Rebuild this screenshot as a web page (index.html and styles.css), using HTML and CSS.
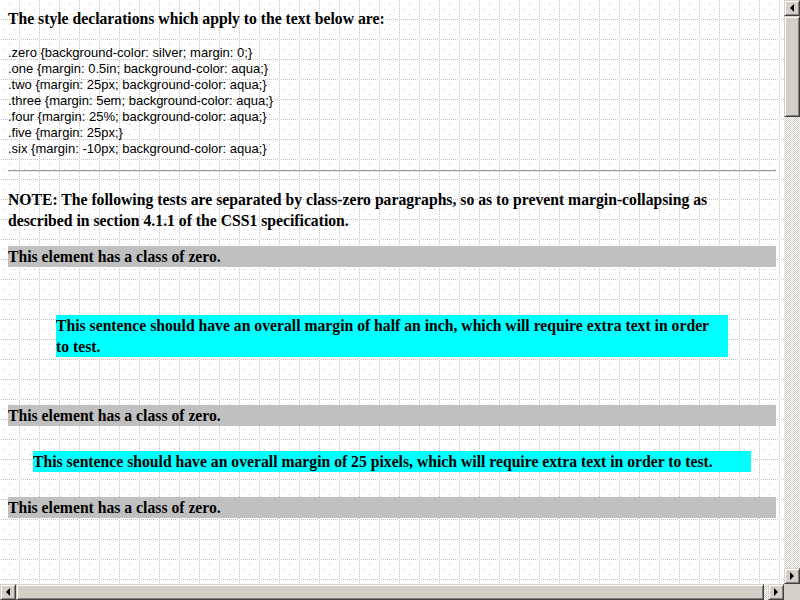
FILE: index.html
```html
<!DOCTYPE html>
<html>
<head>
<meta charset="utf-8">
<title>margin</title>
<link rel="stylesheet" href="styles.css">
</head>
<body>
<div class="window">
  <div class="view">
    <h3 class="title">The style declarations which apply to the text below are:</h3>
<pre class="code">.zero {background-color: silver; margin: 0;}
.one {margin: 0.5in; background-color: aqua;}
.two {margin: 25px; background-color: aqua;}
.three {margin: 5em; background-color: aqua;}
.four {margin: 25%; background-color: aqua;}
.five {margin: 25px;}
.six {margin: -10px; background-color: aqua;}</pre>
    <hr class="rule">
    <p class="note">NOTE: The following tests are separated by class-zero paragraphs, so as to prevent margin-collapsing as<br>described in section 4.1.1 of the CSS1 specification.</p>
    <p class="zero">This element has a class of zero.</p>
    <p class="one">This sentence should have an overall margin of half an inch, which will require extra text in order<br>to test.</p>
    <p class="zero">This element has a class of zero.</p>
    <p class="two">This sentence should have an overall margin of 25 pixels, which will require extra text in order to test.</p>
    <p class="zero">This element has a class of zero.</p>
  </div>
  <div class="vscroll">
    <div class="btn"><span class="tri-left"></span></div>
    <div class="thumb vthumb"></div>
    <div class="trough"></div>
    <div class="btn"><span class="tri-right"></span></div>
  </div>
  <div class="hscroll">
    <div class="btn"><span class="tri-left"></span></div>
    <div class="thumb hthumb"></div>
    <div class="trough"></div>
    <div class="btn"><span class="tri-right"></span></div>
  </div>
  <div class="corner"></div>
</div>
</body>
</html>
```

FILE: styles.css
```css
html, body {
  margin: 0;
  padding: 0;
  overflow: hidden;
  background: #ffffff;
}

.window {
  display: grid;
  grid-template-columns: 784px 16px;
  grid-template-rows: 584px 16px;
  width: 800px;
  height: 600px;
}

.view {
  box-sizing: border-box;
  overflow: hidden;
  padding: 8px;
  color: #000;
  font: bold 15.7px/21px "Liberation Serif", "Times New Roman", serif;
  background-color: #ffffff;
  background-image: url("data:image/svg+xml,%3Csvg xmlns='http://www.w3.org/2000/svg' width='20' height='20' shape-rendering='crispEdges'%3E%3Cg fill='%23c0c0c0'%3E%3Crect x='19' y='0' width='1' height='1'/%3E%3Crect x='19' y='2' width='1' height='1'/%3E%3Crect x='19' y='4' width='1' height='1'/%3E%3Crect x='19' y='6' width='1' height='1'/%3E%3Crect x='19' y='8' width='1' height='1'/%3E%3Crect x='19' y='10' width='1' height='1'/%3E%3Crect x='19' y='12' width='1' height='1'/%3E%3Crect x='19' y='14' width='1' height='1'/%3E%3Crect x='19' y='16' width='1' height='1'/%3E%3Crect x='19' y='18' width='1' height='1'/%3E%3Crect x='1' y='19' width='1' height='1'/%3E%3Crect x='3' y='19' width='1' height='1'/%3E%3Crect x='5' y='19' width='1' height='1'/%3E%3Crect x='7' y='19' width='1' height='1'/%3E%3Crect x='9' y='19' width='1' height='1'/%3E%3Crect x='11' y='19' width='1' height='1'/%3E%3Crect x='13' y='19' width='1' height='1'/%3E%3Crect x='15' y='19' width='1' height='1'/%3E%3Crect x='17' y='19' width='1' height='1'/%3E%3Crect x='9' y='4' width='1' height='1'/%3E%3Crect x='4' y='9' width='1' height='1'/%3E%3Crect x='14' y='9' width='1' height='1'/%3E%3Crect x='9' y='14' width='1' height='1'/%3E%3C/g%3E%3C/svg%3E");
  background-size: 20px 20px;
}

.title {
  margin: 0;
  font-size: 15.7px;
  line-height: 21px;
  font-weight: bold;
}

.code {
  margin: 16px 0 0;
  font: normal 13px/16px "Liberation Sans", Arial, sans-serif;
  white-space: pre;
}

.rule {
  margin: 13px 0 0;
  height: 0;
  border: 0;
  border-top: 1px solid #9a9a9a;
  border-bottom: 1px solid #e8e8e8;
}

.note {
  margin: 17px 0 15px;
}

.zero {
  margin: 0;
  background-color: silver;
}

.one {
  margin: 48px;
  background-color: aqua;
}

.two {
  margin: 25px;
  background-color: aqua;
}

/* scrollbars */
.vscroll {
  display: flex;
  flex-direction: column;
}

.hscroll {
  display: flex;
  flex-direction: row;
}

.btn,
.thumb {
  box-sizing: border-box;
  background: #d4d0c8;
  border: 1px solid;
  border-color: #d4d0c8 #404040 #404040 #d4d0c8;
  box-shadow: inset 1px 1px #ffffff, inset -1px -1px #808080;
}

.btn {
  flex: none;
  width: 16px;
  height: 16px;
  display: flex;
  align-items: center;
  justify-content: center;
}

.vthumb {
  flex: none;
  width: 16px;
  height: 101px;
}

.hthumb {
  flex: none;
  width: 748px;
  height: 16px;
}

.trough {
  flex: 1;
  background-color: #ffffff;
  background-image: repeating-conic-gradient(#d4d0c8 0 25%, #ffffff 0 50%);
  background-size: 2px 2px;
}

.corner {
  background: #d4d0c8;
}

.tri-left {
  width: 0;
  height: 0;
  border-top: 4px solid transparent;
  border-bottom: 4px solid transparent;
  border-right: 4px solid #000;
}

.tri-right {
  width: 0;
  height: 0;
  border-top: 4px solid transparent;
  border-bottom: 4px solid transparent;
  border-left: 4px solid #000;
}
```
